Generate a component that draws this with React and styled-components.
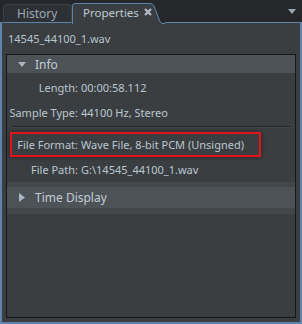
import { createGlobalStyle, styled } from "styled-components";

const GlobalStyle = createGlobalStyle`
  html, body {
    margin: 0;
    padding: 0;
    background: #25272a;
  }
  body {
    font-family: "Noto Sans", "Open Sans", sans-serif;
    font-size: 11px;
    color: #bcc6cf;
  }
`;

const BLUE = "#5e84ad";

const Window = styled.div`
  width: 302px;
  height: 324px;
  display: flex;
  flex-direction: column;
  background: #25272a;
`;

const TabBar = styled.div`
  height: 23px;
  display: flex;
  align-items: flex-end;
  position: relative;
`;

const TabGap = styled.div`
  width: ${({ w }) => w}px;
  height: 22px;
  border-bottom: 1px solid ${BLUE};
`;

const Tab = styled.div`
  width: 69px;
  height: 19px;
  box-sizing: border-box;
  display: flex;
  align-items: center;
  padding-left: 13px;
  background: #2d3034;
  border: 1px solid #3c4044;
  border-bottom: 1px solid ${BLUE};
  border-radius: 4px 4px 0 0;
  color: #9faab4;
  font-size: 12px;
`;

const ActiveTab = styled.div`
  position: relative;
  width: 93px;
  height: 22px;
  display: flex;
  align-items: center;
  gap: 5px;
  padding-left: 11px;
  box-sizing: border-box;
  color: #bfc9d2;
  font-size: 11.5px;

  & > svg.shape {
    position: absolute;
    left: 0;
    top: 0;
  }
  & > span,
  & > svg.close {
    position: relative;
  }
`;

const Filler = styled.div`
  flex: 1;
  height: 22px;
  border-bottom: 1px solid ${BLUE};
  display: flex;
  justify-content: flex-end;
  align-items: center;
  padding-right: 6px;
`;

const Panel = styled.div`
  flex: 1;
  display: flex;
  flex-direction: column;
  background: #3a3e41;
  border: 2px solid ${BLUE};
  border-top: none;
  padding: 0 4px 4px 4px;
  min-height: 0;
`;

const FileName = styled.div`
  height: 31px;
  display: flex;
  align-items: center;
  padding-left: 2px;
  color: #b9c4cd;
`;

const Box = styled.div`
  flex: 1;
  border: 1px solid #151718;
  display: flex;
  flex-direction: column;
`;

const SectionHeader = styled.div`
  height: ${({ h }) => h}px;
  background: #4d5256;
  display: flex;
  align-items: center;
  padding-left: 11px;
  gap: 9px;
  font-size: 12px;
  color: #c2ccd5;
`;

const Rows = styled.div`
  padding-top: 2px;
  display: flex;
  flex-direction: column;
`;

const Row = styled.div`
  position: relative;
  height: 25px;
  display: grid;
  grid-template-columns: 71px 1fr;
  column-gap: 3px;
  align-items: center;

  ${({ highlight }) =>
    highlight &&
    `
    &::after {
      content: "";
      position: absolute;
      left: 3px;
      top: 0;
      width: 251px;
      height: 25px;
      box-sizing: border-box;
      border: 2px solid #e3141b;
      box-shadow: 0 0 4px rgba(0, 0, 0, 0.45);
    }
  `}
`;

const Label = styled.span`
  text-align: right;
  white-space: nowrap;
`;

const Value = styled.span`
  white-space: nowrap;
`;

const Separator = styled.div`
  height: 1px;
  margin: 1px 5px 5px 5px;
  background: #222527;
  box-shadow: 0 1px 0 #43474b;
`;

const Strip = styled.div`
  height: ${({ h }) => h}px;
  background: #43474a;
`;

const Tri = ({ dir }) => (
  <svg width="8" height="9" viewBox="0 0 8 9">
    {dir === "down" ? (
      <path d="M0 2 L8 2 L4 7 Z" fill="#a9b5c1" />
    ) : (
      <path d="M1 0 L7 4.5 L1 9 Z" fill="#a9b5c1" />
    )}
  </svg>
);

const rows = [
  ["Length:", "00:00:58.112"],
  ["Sample Type:", "44100 Hz, Stereo"],
];

const rows2 = [
  ["File Format:", "Wave File, 8-bit PCM (Unsigned)", true],
  ["File Path:", "G:\\14545_44100_1.wav"],
];

export default function App() {
  return (
    <Window>
      <GlobalStyle />
      <TabBar>
        <TabGap w={3} />
        <Tab>History</Tab>
        <ActiveTab>
          <svg className="shape" width="93" height="23" viewBox="0 0 93 23">
            <path
              d="M0.5 23 L0.5 5 Q0.5 2.5 3 2.5 L78 2.5 Q81 2.5 82 5 L88 20.5 Q89 22.5 91 22.5 L93 22.5"
              fill="#3a3e41"
              stroke={BLUE}
              strokeWidth="1"
            />
          </svg>
          <span>Properties</span>
          <svg className="close" width="8" height="8" viewBox="0 0 8 8">
            <path d="M1 1 L7 7 M7 1 L1 7" stroke="#b4bec8" strokeWidth="2.2" />
          </svg>
        </ActiveTab>
        <Filler>
          <svg width="8" height="5" viewBox="0 0 8 5">
            <path d="M0 0 L8 0 L4 5 Z" fill="#9aa5b0" />
          </svg>
        </Filler>
      </TabBar>
      <Panel>
        <FileName>14545_44100_1.wav</FileName>
        <Box>
          <SectionHeader h={18}>
            <Tri dir="down" />
            <span>Info</span>
          </SectionHeader>
          <Rows>
            {rows.map(([l, v]) => (
              <Row key={l}>
                <Label>{l}</Label>
                <Value>{v}</Value>
              </Row>
            ))}
            <Separator />
            {rows2.map(([l, v, h]) => (
              <Row key={l} highlight={h}>
                <Label>{l}</Label>
                <Value>{v}</Value>
              </Row>
            ))}
          </Rows>
          <Strip h={5} />
          <SectionHeader h={21}>
            <Tri dir="right" />
            <span>Time Display</span>
          </SectionHeader>
          <Strip h={6} />
        </Box>
      </Panel>
    </Window>
  );
}
